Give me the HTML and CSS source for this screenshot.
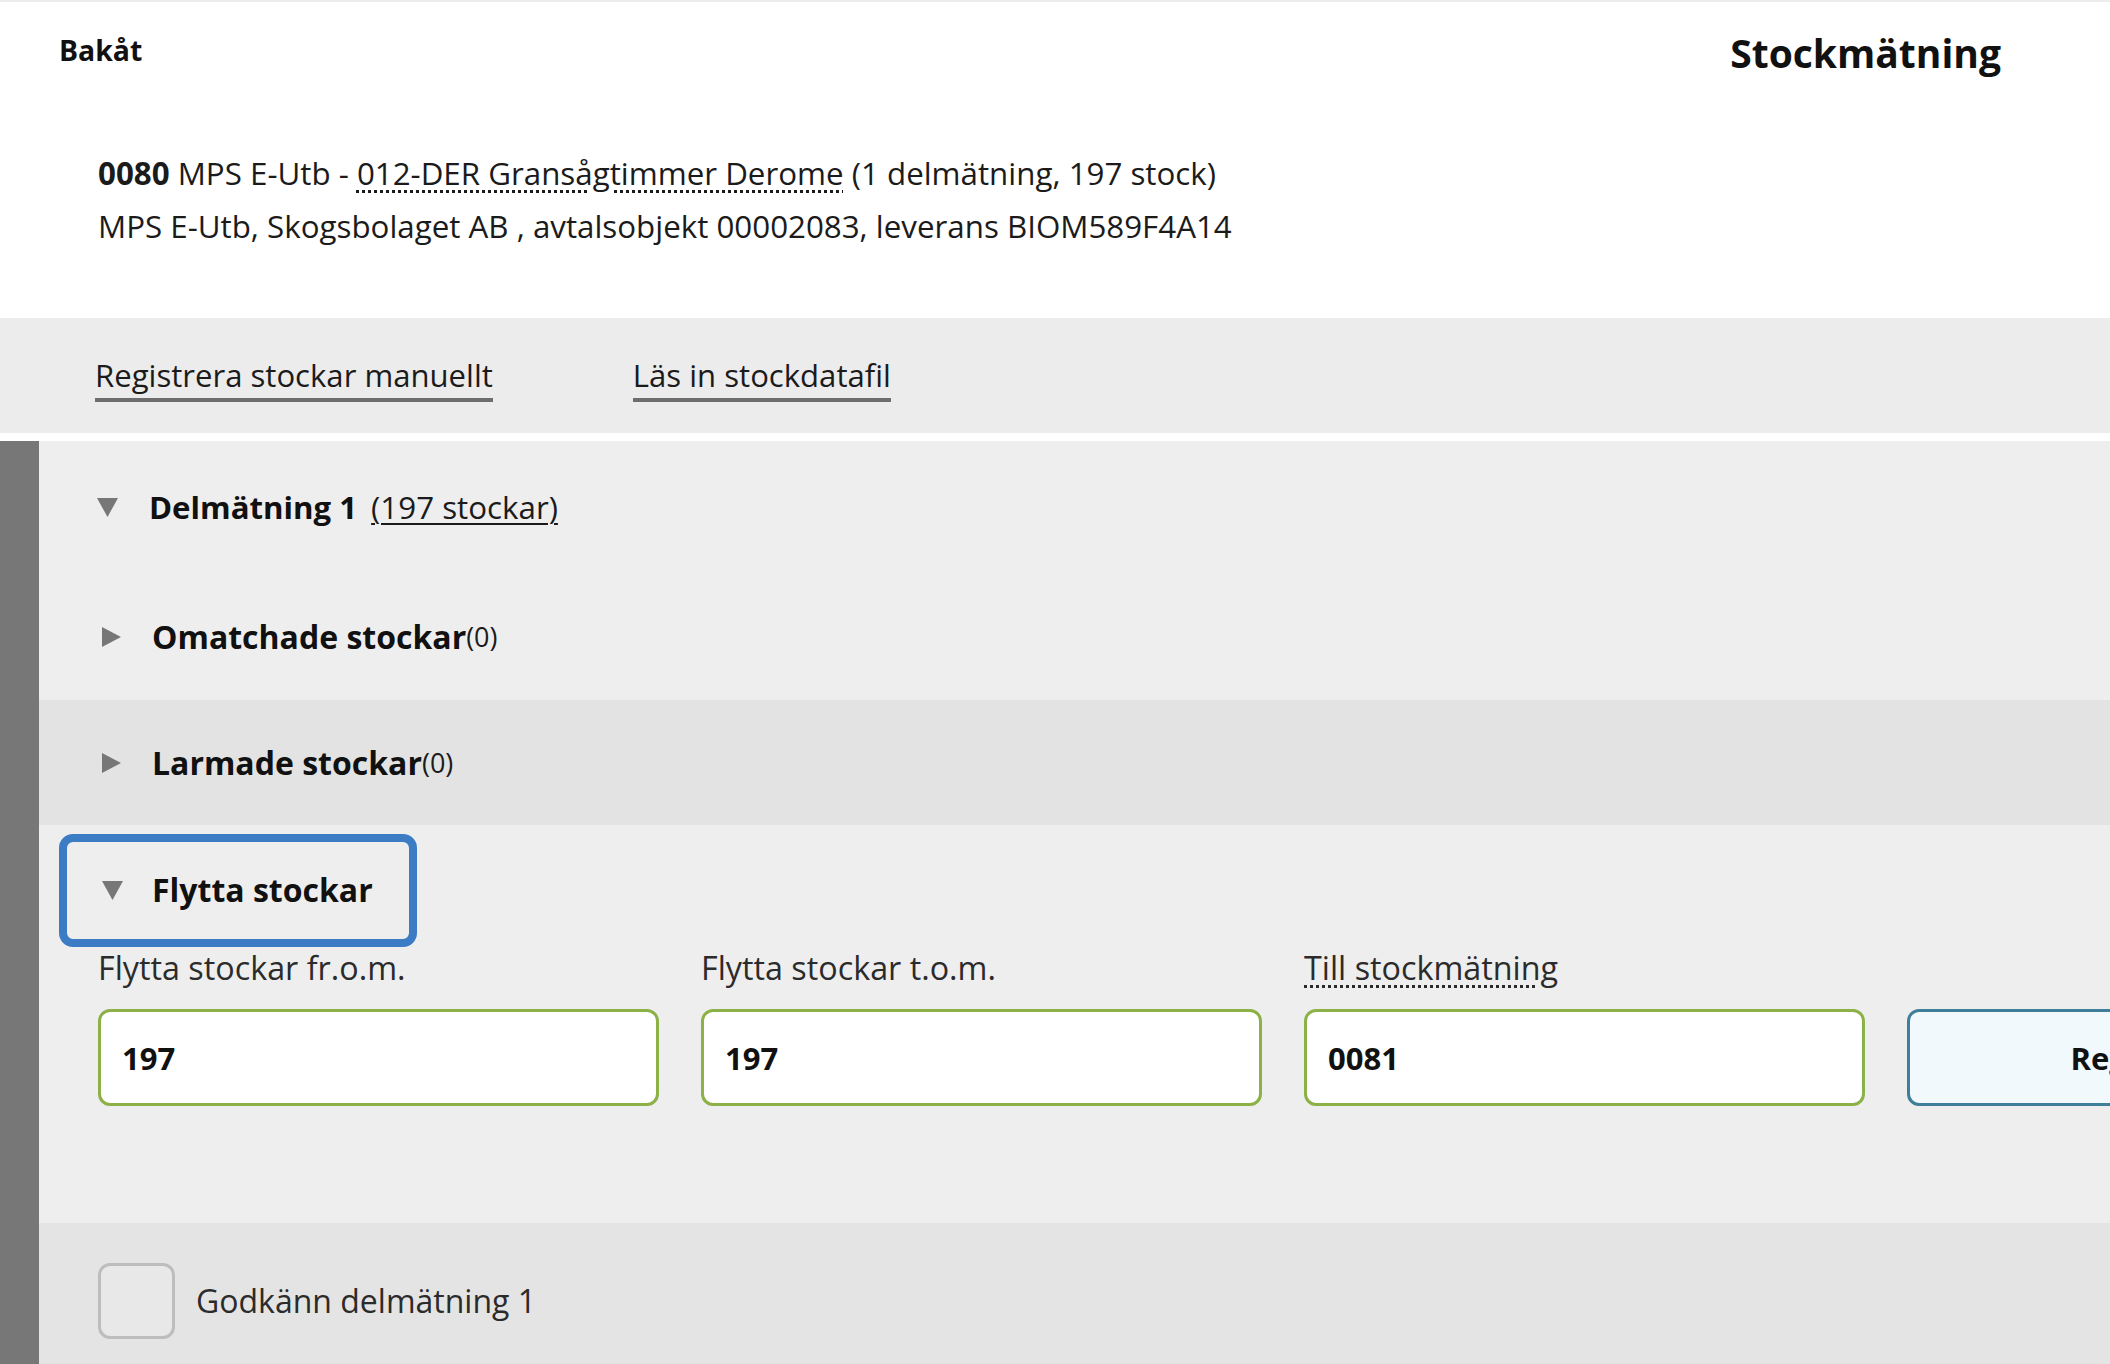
FILE: index.html
```html
<!DOCTYPE html>
<html lang="sv">
<head>
<meta charset="utf-8">
<title>Stockmätning</title>
<link rel="stylesheet" href="styles.css">
</head>
<body>
<div class="topline"></div>
<header class="header">
  <div class="header-row">
    <a class="back" href="#">Bakåt</a>
    <h1 class="title">Stockmätning</h1>
  </div>
  <div class="info">
    <p><b>0080</b> MPS E-Utb - <abbr class="dotted" title="Sortiment">012-DER Gransågtimmer Derome</abbr> (1 delmätning, 197 stock)</p>
    <p>MPS E-Utb, Skogsbolaget AB , avtalsobjekt 00002083, leverans BIOM589F4A14</p>
  </div>
</header>

<nav class="tabs">
  <a class="tab" href="#">Registrera stockar manuellt</a>
  <a class="tab" href="#">Läs in stockdatafil</a>
</nav>

<main class="main">
  <div class="sidebar"></div>
  <div class="content">
    <div class="row row-delm">
      <svg class="tri tri-down" viewBox="0 0 21 19"><polygon points="0,0 21,0 10.5,19" fill="#777"/></svg>
      <span class="row-title">Delmätning 1</span>
      <a class="count-link" href="#">(197 stockar)</a>
    </div>
    <div class="row row-sub">
      <svg class="tri tri-right" viewBox="0 0 19 20"><polygon points="0,0 19,10 0,20" fill="#777"/></svg>
      <span class="row-title">Omatchade stockar</span><span class="count">(0)</span>
    </div>
    <div class="row row-sub row-dark">
      <svg class="tri tri-right" viewBox="0 0 19 20"><polygon points="0,0 19,10 0,20" fill="#777"/></svg>
      <span class="row-title">Larmade stockar</span><span class="count">(0)</span>
    </div>
    <section class="move">
      <div class="move-summary">
        <svg class="tri tri-down" viewBox="0 0 21 19"><polygon points="0,0 21,0 10.5,19" fill="#777"/></svg>
        <span class="row-title">Flytta stockar</span>
      </div>
      <div class="fields">
        <div class="field">
          <label class="field-label">Flytta stockar fr.o.m.</label>
          <div class="input">197</div>
        </div>
        <div class="field">
          <label class="field-label">Flytta stockar t.o.m.</label>
          <div class="input">197</div>
        </div>
        <div class="field">
          <label class="field-label"><abbr class="dotted" title="Stockmätning">Till stockmätning</abbr></label>
          <div class="input">0081</div>
        </div>
        <div class="field field-btn">
          <span class="field-label">&nbsp;</span>
          <button class="btn">Registrera flytt</button>
        </div>
      </div>
    </section>
    <div class="approve">
      <span class="checkbox"></span>
      <span class="approve-label">Godkänn delmätning 1</span>
    </div>
  </div>
</main>
</body>
</html>
```

FILE: styles.css
```css
html, body {
  margin: 0;
  padding: 0;
  overflow: hidden;
  background: #ffffff;
}
body {
  font-family: "Open Sans", "Noto Sans", sans-serif;
  color: #1b1b1b;
  width: 2110px;
  height: 1364px;
}
.topline {
  height: 2px;
  background: #ececec;
}
.header {
  height: 316px;
  box-sizing: border-box;
}
.header-row {
  height: 100px;
  display: flex;
  align-items: center;
  justify-content: space-between;
  padding: 0 109px 0 59px;
}
.back {
  font-size: 28.4px;
  font-weight: 700;
  color: #111;
  text-decoration: none;
  margin-bottom: 4px;
}
.title {
  margin: 0;
  font-size: 39px;
  font-weight: 700;
  color: #111;
}
.info {
  margin-top: 45px;
  padding-left: 98px;
  font-size: 31.3px;
  line-height: 53px;
  color: #1b1b1b;
}
.info p {
  margin: 0;
}
.dotted {
  text-decoration: underline dotted;
  text-decoration-thickness: 3px;
  text-underline-offset: 5px;
}
.tabs {
  height: 115px;
  box-sizing: border-box;
  background: #ececec;
  padding: 37px 0 0 95px;
  display: flex;
  gap: 140px;
  align-items: flex-start;
}
.tab {
  font-size: 31.1px;
  line-height: 40px;
  color: #1b1b1b;
  text-decoration: none;
  padding-bottom: 3px;
  border-bottom: 4px solid #6d6d6d;
}
.main {
  margin-top: 8px;
  display: flex;
  height: 923px;
  overflow: hidden;
}
.sidebar {
  width: 39px;
  flex: none;
  background: #777777;
}
.content {
  flex: 1;
  background: #eeeeee;
  display: flex;
  flex-direction: column;
  min-width: 0;
}
.row {
  display: flex;
  align-items: center;
}
.row-delm {
  height: 132px;
  padding-left: 58px;
}
.row-sub {
  height: 127px;
  padding-left: 63px;
}
.row-sub + .row-dark {
  height: 125px;
}
.row-dark {
  background: #e3e3e3;
}
.tri {
  flex: none;
}
.tri-down {
  width: 21px;
  height: 19px;
}
.tri-right {
  width: 19px;
  height: 20px;
}
.row-title {
  font-size: 32px;
  font-weight: 700;
  line-height: 40px;
  color: #111;
}
.row-delm .row-title {
  margin-left: 31px;
  font-size: 31.2px;
}
.row-sub .row-title {
  margin-left: 31px;
}
.count-link {
  font-size: 31.3px;
  color: #1b1b1b;
  margin-left: 14px;
  text-decoration: underline;
  text-decoration-thickness: 2px;
  text-underline-offset: 4px;
}
.count {
  font-size: 27px;
  color: #1b1b1b;
}
.move {
  padding: 9px 0 117px 20px;
}
.move-summary {
  display: inline-flex;
  align-items: center;
  border: 8px solid #3b7cc4;
  border-radius: 14px;
  padding: 28px 36px 29px 35px;
}
.move-summary .row-title {
  margin-left: 29px;
}
.fields {
  display: grid;
  grid-template-columns: repeat(4, 561px);
  column-gap: 42px;
  margin-left: 39px;
}
.field {
  display: flex;
  flex-direction: column;
}
.field-label {
  font-size: 32.3px;
  line-height: 40px;
  color: #2b2b2b;
  margin-top: 0;
  margin-bottom: 22px;
}
.input {
  height: 97px;
  box-sizing: border-box;
  border: 3px solid #8cb146;
  border-radius: 12px;
  background: #ffffff;
  padding-left: 21px;
  display: flex;
  align-items: center;
  font-size: 31px;
  font-weight: 700;
  color: #111;
}
.btn {
  height: 97px;
  box-sizing: border-box;
  border: 3px solid #3f7f99;
  border-radius: 12px;
  background: #f1f9fc;
  font-family: inherit;
  font-size: 31px;
  font-weight: 700;
  color: #111;
  white-space: nowrap;
}
.approve {
  flex: 1;
  background: #e4e4e4;
  display: flex;
  align-items: flex-start;
  padding: 40px 0 0 59px;
}
.checkbox {
  width: 77px;
  height: 76px;
  box-sizing: border-box;
  border: 3px solid #bdbdbd;
  border-radius: 12px;
  background: #e8e8e8;
  flex: none;
}
.approve-label {
  margin-left: 21px;
  font-size: 32px;
  line-height: 76px;
  color: #2b2b2b;
}
```
